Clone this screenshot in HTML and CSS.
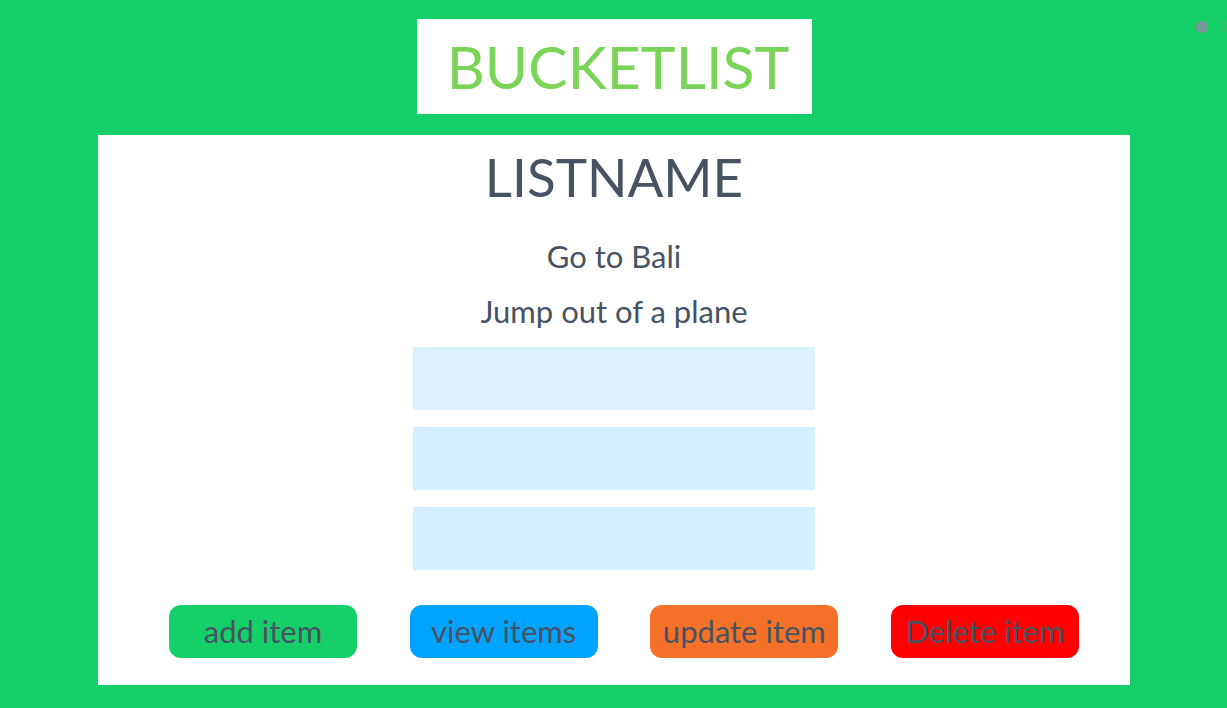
FILE: index.html
```html
<!DOCTYPE html>
<html lang="en">
<head>
<meta charset="utf-8">
<meta name="viewport" content="width=device-width, initial-scale=1">
<title>Bucketlist</title>
<link rel="stylesheet" href="styles.css">
</head>
<body>
<header class="top">
  <h1 class="brand">BUCKETLIST</h1>
  <svg class="marker" viewBox="0 0 32 16" aria-hidden="true">
    <circle cx="7" cy="8" r="6" fill="#8294a0"/>
    <path d="M5 8h4" stroke="#4fae80" stroke-width="2"/>
    <path d="M30 2v4M30 8v5" stroke="#4bb67c" stroke-width="2"/>
  </svg>
</header>
<main class="panel">
  <h2 class="list-name">LISTNAME</h2>
  <ul class="items">
    <li>Go to Bali</li>
    <li>Jump out of a plane</li>
  </ul>
  <form class="fields">
    <input class="field field-first" type="text" aria-label="Item 3">
    <input class="field" type="text" aria-label="Item 4">
    <input class="field" type="text" aria-label="Item 5">
  </form>
  <div class="actions">
    <button class="action add" type="button">add item</button>
    <button class="action view" type="button">view items</button>
    <button class="action update" type="button">update item</button>
    <button class="action delete" type="button">Delete item</button>
  </div>
</main>
</body>
</html>
```
FILE: styles.css
```css
* {
  box-sizing: border-box;
}

body {
  margin: 0;
  min-height: 100vh;
  padding: 19px 97px 22px 98px;
  background: #15d068;
  color: #475262;
  font-family: Lato, sans-serif;
}

.top {
  display: flex;
  justify-content: center;
  margin-bottom: 21px;
}

.brand {
  margin: 0;
  width: 395px;
  padding: 12px 0 12px 8px;
  background: #fff;
  color: #79d458;
  font-size: 59px;
  font-weight: 400;
  line-height: 71px;
  text-align: center;
}

.marker {
  position: absolute;
  top: 19px;
  right: 0;
  width: 32px;
  height: 16px;
}

.panel {
  padding: 9px 51px 27px 71px;
  background: #fff;
}

.list-name {
  margin: 0;
  padding-right: 20px;
  font-size: 53px;
  font-weight: 400;
  line-height: 66px;
  text-align: center;
}

.items {
  margin: 0;
  padding: 19px 20px 8px 0;
  list-style: none;
  font-size: 31px;
  line-height: 55px;
  text-align: center;
}

.fields {
  display: flex;
  flex-direction: column;
  align-items: center;
  gap: 17px;
  padding-right: 20px;
}

.field {
  width: 402px;
  max-width: 100%;
  height: 63px;
  padding: 0 16px;
  border: 0;
  border-radius: 0;
  background: #d4efff;
  color: inherit;
  font: inherit;
  font-size: 31px;
}

.field-first {
  background: #dbf1ff;
}

.actions {
  display: flex;
  flex-wrap: wrap;
  justify-content: space-between;
  gap: 16px;
  margin-top: 35px;
}

.action {
  width: 188px;
  height: 53px;
  padding: 0;
  border: 0;
  border-radius: 12px;
  color: #475262;
  font: inherit;
  font-size: 31px;
  line-height: 53px;
}

.add {
  background: #15d068;
}

.view {
  background: #00a4ff;
}

.update {
  background: #f57128;
}

.delete {
  background: #fe0000;
}
```
